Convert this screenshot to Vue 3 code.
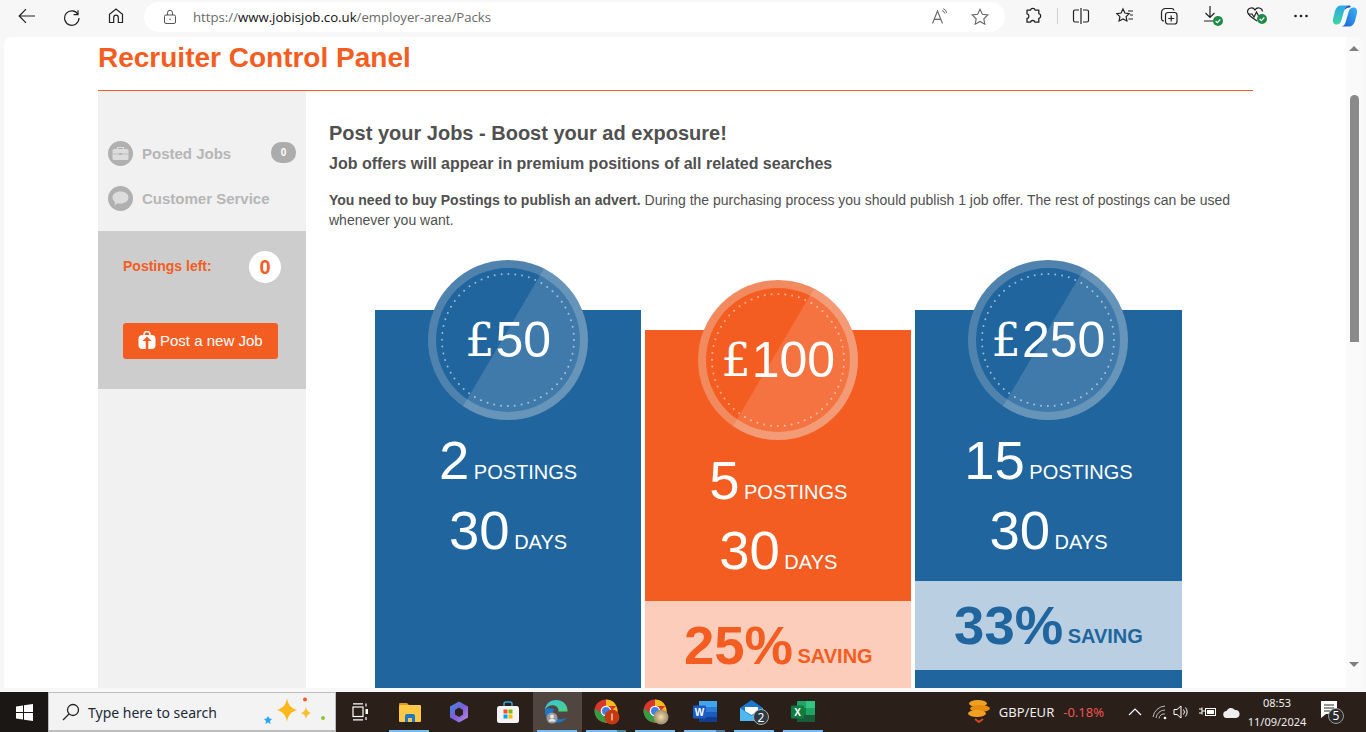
<script setup>
const cards = [
  { symbol: '£', amount: '50', posts: 2, tone: 'blue', saving: '' },
  { symbol: '£', amount: '100', posts: 5, tone: 'orange', saving: '25%' },
  { symbol: '£', amount: '250', posts: 15, tone: 'blue', saving: '33%' }
]
const palettes = {
  blue: { disc: '#20659d', ring: '#4f83ae' },
  orange: { disc: '#f45d22', ring: '#f28a60' }
}
const nav = [
  { label: 'Posted Jobs', badge: '0', icon: 'case' },
  { label: 'Customer Service', badge: '', icon: 'chat' }
]
</script>

<template>
  <div class="screen">
    <header class="toolbar">
      <div class="nav-group">
        <span class="tool wide"><svg width="20" height="20" viewBox="0 0 20 20" fill="none" stroke="#222" stroke-width="1.2"><path d="M18 10H2.500M9 3.200 2.200 10 9 16.800"/></svg></span>
        <span class="tool wide"><svg width="20" height="20" viewBox="0 0 20 20" fill="none" stroke="#222" stroke-width="1.2"><path d="M16 4.200V8.600H11.600"/><path d="M16 8.400A7.200 7.200 0 1 0 17 12"/></svg></span>
        <span class="tool wide"><svg width="20" height="20" viewBox="0 0 20 20" fill="none" stroke="#222" stroke-width="1.2"><path d="M3.500 16.500V8.400L10 3l6.500 5.400v8.100h-4.200v-5a2.300 2.300 0 0 0-4.600 0v5Z"/></svg></span>
      </div>
      <div class="address">
        <svg class="lock" width="16" height="16" viewBox="0 0 16 16" fill="none" stroke="#555" stroke-width="1"><rect x="2.500" y="6" width="11" height="8.500" rx="1.500"/><path d="M5.500 6V3.800a2.500 2.500 0 0 1 5 0V6"/><circle cx="8" cy="10.200" r=".8" fill="#555" stroke="none"/></svg>
        <span class="url">https://<b>www.jobisjob.co.uk</b>/employer-area/Packs</span>
        <span class="addr-right">
          <svg width="20" height="20" viewBox="0 0 20 20" fill="none" stroke="#666" stroke-width="1.100"><path d="M2.500 16.500 7.500 4l5 12.500M4.300 12.400h6.400"/><path d="M12 3.500a4 4 0 0 1 2.800 3M13.200 1.600a6 6 0 0 1 3.600 4.400" stroke-width="1"/></svg>
          <svg width="20" height="20" viewBox="0 0 20 20" fill="none" stroke="#666" stroke-width="1.100"><path d="m10 2.300 2.400 5 5.400.7-4 3.800 1 5.400-4.800-2.700-4.800 2.700 1-5.400-4-3.800 5.400-.7Z"/></svg>
        </span>
      </div>
      <div class="tools-right">
        <span class="tool"><svg width="20" height="20" viewBox="0 0 20 20" fill="none" stroke="#222" stroke-width="1.300"><path d="M7.500 4.200a2.400 2.400 0 0 1 4.700 0h3.600v3.500a2.400 2.400 0 0 1 0 4.700v3.800H12a2.400 2.400 0 0 0-4.600 0H4V12.500a2.400 2.400 0 0 0 0-4.700V4.200Z" stroke-linejoin="round"/></svg></span>
        <span class="sep"></span>
        <span class="tool"><svg width="20" height="20" viewBox="0 0 20 20" fill="none" stroke="#222" stroke-width="1.200"><path d="M8 4H4a1.500 1.500 0 0 0-1.500 1.500v9A1.500 1.500 0 0 0 4 16h4M12 4h4a1.500 1.500 0 0 1 1.500 1.500v9A1.500 1.500 0 0 1 16 16h-4M10 2v16"/></svg></span>
        <span class="tool"><svg width="20" height="20" viewBox="0 0 20 20" fill="none" stroke="#222" stroke-width="1.200"><path d="m8 3 1.900 4 4.300.6-3.100 3 .8 4.400L8 12.900 4.100 15l.8-4.400-3.100-3 4.300-.6Z"/><path d="M13 5h5M15 9h3M13.500 13H18"/></svg></span>
        <span class="tool"><svg width="20" height="20" viewBox="0 0 20 20" fill="none" stroke="#222" stroke-width="1.200"><rect x="6.500" y="6.500" width="11.500" height="11.500" rx="2.500"/><path d="M12.200 9.500v6M9.200 12.500h6"/><path d="M5 15a2.500 2.500 0 0 1-2.500-2.500V6.500a4 4 0 0 1 4-4h6A2.500 2.500 0 0 1 15 4.500"/></svg></span>
        <span class="tool"><svg width="22" height="24" viewBox="0 0 22 24" fill="none" stroke="#222" stroke-width="1.200"><path d="M8 2v11M3.500 9 8 13.500 12.500 9M2 17h12"/><circle cx="16" cy="17" r="5" fill="#1e8a45" stroke="none"/><path d="m13.600 17 1.700 1.700 3-3.200" stroke="#fff" stroke-width="1.100"/></svg></span>
        <span class="tool"><svg width="24" height="22" viewBox="0 0 24 22" fill="none" stroke="#222" stroke-width="1.200"><path d="M12 16C9 14 2.500 10.500 2.500 6.500A4 4 0 0 1 10 5a4 4 0 0 1 7.500 1.500"/><path d="M3 9h4l2 3 2.500-5 2 4h3"/><circle cx="17" cy="14" r="5" fill="#1e8a45" stroke="none"/><path d="m14.600 14 1.700 1.700 3-3.200" stroke="#fff" stroke-width="1.100"/></svg></span>
        <span class="tool"><svg width="16" height="4" viewBox="0 0 16 4" fill="#222"><circle cx="2.500" cy="2" r="1.300"/><circle cx="8" cy="2" r="1.300"/><circle cx="13.500" cy="2" r="1.300"/></svg></span>
        <span class="tool"><svg width="26" height="24" viewBox="0 0 26 24"><defs><linearGradient id="cp1" x1="0" y1="0" x2="0" y2="1"><stop offset="0" stop-color="#2ba8e8"/><stop offset="1" stop-color="#3fd6a0"/></linearGradient><linearGradient id="cp2" x1="1" y1="0" x2="0" y2="1"><stop offset="0" stop-color="#38b6f0"/><stop offset="1" stop-color="#1d5fd8"/></linearGradient></defs><path d="M9 1.500h7c-2.500 1-3.500 3.500-4 5.500L9.500 16c-.7 3-2.500 4.500-5 4.500-3 0-4-2.500-3.500-5.500l2-8C4 3.500 6 1.500 9 1.500Z" fill="url(#cp1)"/><path d="M17 22.500h-7c2.500-1 3.500-3.500 4-5.500l2.500-9c.7-3 2.500-4.500 5-4.500 3 0 4 2.500 3.500 5.500l-2 8c-1 3.500-3 5.500-6 5.500Z" fill="url(#cp2)"/><path d="M12 7c.5-2 1.500-4.500 4-5.500h1c1.500 0 2.500 1.500 1 2-3 0-5 1.500-6 3.500Z" fill="#1a5ab8"/></svg></span>
      </div>
    </header>

    <div class="viewport">
      <div class="page">
        <h1 class="title">Recruiter Control Panel</h1>
        <div class="columns">
          <aside class="sidebar">
            <nav class="side-nav">
              <div v-for="item in nav" :key="item.label" class="side-item">
                <span class="side-icon">
                  <svg v-if="item.icon === 'case'" width="17" height="15" viewBox="0 0 17 15"><rect x=".5" y="3" width="16" height="11" rx="1.500" fill="#dcdcdc"/><path d="M5.500 3V1.500h6V3" fill="none" stroke="#dcdcdc" stroke-width="1.200"/><path d="M.5 8h16" stroke="#b5b5b5" stroke-width=".7"/><rect x="7" y="7" width="3" height="2" fill="#b5b5b5"/></svg>
                  <svg v-else width="19" height="17" viewBox="0 0 19 17"><path d="M9.500 1.500c4.500 0 8 2.500 8 6s-3.500 6-8 6c-1 0-1.800-.1-2.500-.3L3.500 15.500l.7-3.300C2.500 11 1.500 9.400 1.500 7.500c0-3.500 3.500-6 8-6Z" fill="#dcdcdc"/></svg>
                </span>
                <span class="side-label">{{ item.label }}</span>
                <span v-if="item.badge" class="side-badge">{{ item.badge }}</span>
              </div>
            </nav>
            <section class="postings">
              <div class="postings-row">
                <span class="postings-label">Postings left:</span>
                <span class="postings-count">0</span>
              </div>
              <button class="post-btn">
                <svg width="18" height="18" viewBox="0 0 18 18"><path d="M6 5V3.500a3 3 0 0 1 6 0V5" fill="none" stroke="#fff" stroke-width="1.500"/><rect x="0.500" y="4" width="17" height="14" rx="4" fill="#fff"/><path d="M9 5.500 13.500 10H10.300v8H7.700v-8H4.500Z" fill="#f45d22"/></svg>
                <span>Post a new Job</span>
              </button>
            </section>
          </aside>

          <main class="main">
            <h2 class="lead">Post your Jobs - Boost your ad exposure!</h2>
            <h3 class="sublead">Job offers will appear in premium positions of all related searches</h3>
            <p class="intro"><b>You need to buy Postings to publish an advert.</b> During the purchasing process you should publish 1 job offer. The rest of postings can be used whenever you want.</p>

            <div class="cards">
              <article v-for="(card, i) in cards" :key="card.amount" class="card" :class="card.tone">
                <div class="coin">
                  <svg width="160" height="160" viewBox="0 0 160 160">
                    <defs>
                      <clipPath :id="'clip' + i"><circle cx="80" cy="80" r="80"/></clipPath>
                    </defs>
                    <circle cx="80" cy="80" r="80" :fill="palettes[card.tone].ring"/>
                    <circle cx="80" cy="80" r="72" :fill="palettes[card.tone].disc"/>
                    <path d="M127 -10H180V170H21Z" fill="#fff" fill-opacity=".14" :clip-path="'url(#clip' + i + ')'"/>
                    <circle cx="80" cy="80" r="66" fill="none" stroke="#fff" stroke-opacity=".55" stroke-width="2" stroke-linecap="round" stroke-dasharray="0 6.910"/>
                  </svg>
                  <span class="price"><span class="symbol">{{ card.symbol }}</span>{{ card.amount }}</span>
                </div>
                <div class="rows">
                  <div class="row"><span class="num">{{ card.posts }}</span> <span class="unit">POSTINGS</span></div>
                  <div class="row"><span class="num">30</span> <span class="unit">DAYS</span></div>
                </div>
                <div v-if="card.saving" class="saving">
                  <span class="pct">{{ card.saving }}</span> <span class="save-word">SAVING</span>
                </div>
              </article>
            </div>
          </main>
        </div>
      </div>
      <div class="scrollbar">
        <span class="arrow up"></span>
        <span class="thumb"></span>
        <span class="arrow down"></span>
      </div>
    </div>

    <footer class="taskbar">
      <div class="start"><svg width="17" height="17" viewBox="0 0 17 17" fill="#fff"><path d="M0 2.400 7 1.400V8H0ZM8 1.300 17 0V8H8ZM0 9h7v6.600L0 14.600ZM8 9h9v8L8 15.700Z"/></svg></div>
      <div class="search">
        <svg width="20" height="20" viewBox="0 0 20 20" fill="none" stroke="#222" stroke-width="1.300"><circle cx="12" cy="8" r="5.500"/><path d="M8 12 2 18"/></svg>
        <span class="search-text">Type here to search</span>
        <svg class="sparkles" width="66" height="30" viewBox="0 0 66 30"><path d="M27 1c1 7 4 10 10 12-6 2-9 5-10 12-1-7-4-10-10-12 6-2 9-5 10-12Z" fill="#fbb81b"/><path d="M46 10c.5 3 2 5 5 6-3 1-4.500 3-5 6-.5-3-2-5-5-6 3-1 4.500-3 5-6Z" fill="#fbc02d"/><path d="M8 19l1.500 2.500 2.500.5-2 2 .5 3L8 25.500 5.500 27l.5-3-2-2 2.500-.5Z" fill="#2aa8f0"/><circle cx="45" cy="2.500" r="2" fill="#ef5a28"/><circle cx="63" cy="21" r="2" fill="#8cc63f"/></svg>
      </div>
      <span class="task"><svg width="17" height="18" viewBox="0 0 17 18" fill="none" stroke="#fff" stroke-width="1.200"><rect x="1" y="4" width="10" height="9.500"/><path d="M1 .8h10M1 16.800h10M14 .5v3M14 14v3"/><rect x="13.500" y="6" width="2.500" height="5" fill="#fff" stroke="none"/></svg></span>
      <span class="task on"><svg width="24" height="22" viewBox="0 0 24 22"><path d="M1 3a1 1 0 0 1 1-1h7l2 2H1Z" fill="#d99a1e"/><rect x="1" y="4" width="22" height="17" rx="1" fill="#fcc846"/><path d="M7 21v-6a2 2 0 0 1 2-2h6a2 2 0 0 1 2 2v6h-3v-4h-4v4Z" fill="#1b77c9"/></svg></span>
      <span class="task"><svg width="24" height="24" viewBox="0 0 24 24"><defs><linearGradient id="cpl" x1="0" y1="0" x2="1" y2="1"><stop offset="0" stop-color="#3a8ce0"/><stop offset=".5" stop-color="#7a5fd8"/><stop offset="1" stop-color="#c58ae8"/></linearGradient></defs><path d="M12 1.500 21 6.500v11L12 22.500 3 17.500v-11Zm0 6L8 10v4.500l4 2.500 4-2.500V10Z" fill="url(#cpl)"/></svg></span>
      <span class="task"><svg width="24" height="24" viewBox="0 0 24 24"><path d="M8 7V4a2 2 0 0 1 2-2h4a2 2 0 0 1 2 2v3" fill="none" stroke="#2aa8e0" stroke-width="1.500"/><rect x="1" y="6" width="22" height="17" rx="2.500" fill="#f4f4f4"/><rect x="7.500" y="9.500" width="4" height="4" fill="#f25022"/><rect x="12.500" y="9.500" width="4" height="4" fill="#7fba00"/><rect x="7.500" y="14.500" width="4" height="4" fill="#00a4ef"/><rect x="12.500" y="14.500" width="4" height="4" fill="#ffb900"/></svg></span>
      <span class="task on active"><svg width="26" height="26" viewBox="0 0 26 26"><defs><linearGradient id="edg" x1="0" y1="0" x2="1" y2="1"><stop offset="0" stop-color="#36c4ea"/><stop offset="1" stop-color="#4ad27a"/></linearGradient></defs><path d="M12 1C6 1 1.500 5 1 11c2-4 6-5.500 9.500-4.500 3 1 4.500 3.500 4 6h9c.5-6-4-11.500-11.500-11.500Z" fill="url(#edg)"/><path d="M1 11c-.5 6 3.500 12 10.500 12.500 5 .5 9-1.500 11-5-3 2-8 2.500-11 .5C8 17 8 12.500 10.500 10 6 8.500 2.500 9 1 11Z" fill="#1b78c8"/><circle cx="8" cy="19" r="5.500" fill="#9a9a9a"/><circle cx="8" cy="17.500" r="2" fill="#e8e8e8"/><path d="M4.500 22.500a3.600 3.600 0 0 1 7 0Z" fill="#e8e8e8"/></svg></span>
      <span class="task on multi"><svg width="26" height="26" viewBox="0 0 26 26"><circle cx="12" cy="12" r="11.500" fill="#d8372c"/><path d="M12 .5a11.500 11.500 0 0 1 10.300 6.400H12Z" fill="#f3bd1a"/><path d="M22.300 6.900A11.500 11.500 0 0 1 11 23.500L16.500 13Z" fill="#f3bd1a"/><path d="M.9 9.500A11.500 11.500 0 0 0 12 23.500l5-9.500-10 0Z" fill="#2f9e44"/><circle cx="12" cy="12" r="5.300" fill="#fff"/><circle cx="12" cy="12" r="4" fill="#3b82e8"/><circle cx="18" cy="18" r="7.500" fill="#c23a14"/><rect x="17.300" y="14.500" width="1.400" height="7" fill="#f4d0a0"/></svg></span>
      <span class="task on"><svg width="26" height="26" viewBox="0 0 26 26"><defs><radialGradient id="gold"><stop offset="0" stop-color="#f5dca0"/><stop offset="1" stop-color="#9a8a70"/></radialGradient></defs><circle cx="12" cy="12" r="11.500" fill="#d8372c"/><path d="M12 .5a11.500 11.500 0 0 1 10.300 6.400H12Z" fill="#f3bd1a"/><path d="M22.300 6.900A11.500 11.500 0 0 1 11 23.500L16.500 13Z" fill="#f3bd1a"/><path d="M.9 9.500A11.500 11.500 0 0 0 12 23.500l5-9.500-10 0Z" fill="#2f9e44"/><circle cx="12" cy="12" r="5.300" fill="#fff"/><circle cx="12" cy="12" r="4" fill="#3b82e8"/><circle cx="18" cy="18" r="7.500" fill="url(#gold)"/></svg></span>
      <span class="task on multi"><svg width="26" height="24" viewBox="0 0 26 24"><rect x="7" y="1" width="18" height="21" rx="1" fill="#2b7cd3"/><rect x="7" y="1" width="18" height="6" fill="#41a5ee"/><rect x="7" y="12" width="18" height="5" fill="#185abd"/><rect x="7" y="17" width="18" height="5" fill="#103f91"/><rect x="1" y="5.500" width="13" height="13" rx="1" fill="#1a5cc4"/><text x="7.500" y="15.500" class="app-letter" text-anchor="middle">W</text></svg></span>
      <span class="task on"><svg width="30" height="26" viewBox="0 0 30 26"><path d="M1 9 12.500 1 24 9v13H1Z" fill="#1b78d0"/><path d="M1 9v13h23V9L12.500 17Z" fill="#4fb8f0"/><path d="M6 8h13v4l-6.500 4L6 12Z" fill="#fff"/><circle cx="22" cy="18" r="7.500" fill="#2d3a44" stroke="#aaa" stroke-width="1"/><text x="22" y="22.500" class="badge-digit" text-anchor="middle">2</text></svg></span>
      <span class="task on"><svg width="26" height="24" viewBox="0 0 26 24"><rect x="7" y="1" width="18" height="21" rx="1" fill="#21a366"/><rect x="16" y="1" width="9" height="7" fill="#33c481"/><rect x="7" y="8" width="9" height="7" fill="#107c41"/><rect x="7" y="15" width="18" height="7" fill="#185c37"/><rect x="1" y="5.500" width="13" height="13" rx="1" fill="#107c41"/><text x="7.500" y="15.500" class="app-letter" text-anchor="middle">X</text></svg></span>

      <div class="tray">
        <div class="widget">
          <svg width="24" height="26" viewBox="0 0 24 26"><ellipse cx="11" cy="4.500" rx="9" ry="3.500" fill="#f0a020"/><ellipse cx="13" cy="9.500" rx="10" ry="3.500" fill="#e88c10"/><ellipse cx="10" cy="14.500" rx="9" ry="3.500" fill="#f0a020"/><path d="m8 20 4 3 4-3" fill="none" stroke="#d8481c" stroke-width="2"/></svg>
          <span class="pair">GBP/EUR</span>
          <span class="delta">-0.18%</span>
        </div>
        <span class="tray-icon chev"><svg width="14" height="8" viewBox="0 0 14 8" fill="none" stroke="#fff" stroke-width="1.200"><path d="m1 7 6-6 6 6"/></svg></span>
        <span class="tray-icon wifi"><svg width="16" height="16" viewBox="0 0 16 16" fill="none" stroke="#bbb" stroke-width="1"><path d="M1 13a13 13 0 0 1 12-11M4 14a9 9 0 0 1 9-8M7 14.500a5 5 0 0 1 6-4.500"/><circle cx="13" cy="14" r="1.300" fill="#fff" stroke="none"/></svg></span>
        <span class="tray-icon vol"><svg width="18" height="16" viewBox="0 0 18 16" fill="none" stroke="#fff" stroke-width="1"><path d="M1 5.500h3L8 2v12l-4-3.500H1Z"/><path d="M10.500 5.500a4 4 0 0 1 0 5M12.500 3.500a7 7 0 0 1 0 9"/></svg></span>
        <span class="tray-icon batt"><svg width="17" height="12" viewBox="0 0 17 12"><path d="M0 3h3M0 7h3M3 1.500v7M3 5h3" stroke="#fff" fill="none"/><rect x="6.500" y="2.500" width="10" height="7" fill="none" stroke="#fff"/><rect x="8" y="4" width="7" height="4" fill="#fff"/></svg></span>
        <span class="tray-icon cloud"><svg width="17" height="11" viewBox="0 0 17 11" fill="#eee"><path d="M4 11a3.500 3.500 0 0 1-.5-7A5 5 0 0 1 12 3a4 4 0 0 1 1 8Z"/></svg></span>
        <div class="clock"><span>08:53</span><span>11/09/2024</span></div>
        <span class="notif"><svg width="30" height="28" viewBox="0 0 30 28"><path d="M3 3h16v13H8l-5 4Z" fill="#fff"/><path d="M6 7h10M6 10h10M6 13h6" stroke="#2a2a2a"/><circle cx="18" cy="18" r="7.500" fill="#2b2b2b" stroke="#999"/><text x="18" y="22" class="badge-digit" text-anchor="middle">5</text></svg></span>
      </div>
    </footer>
  </div>
</template>

<style>
html, body { margin: 0; padding: 0; overflow: hidden; }
</style>

<style scoped>
.screen {
  width: 1366px;
  height: 732px;
  display: flex;
  flex-direction: column;
  background: #f7f7f7;
  overflow: hidden;
  font-family: "Liberation Sans", Arial, sans-serif;
}

/* Browser toolbar */
.toolbar { height: 37px; flex: none; display: flex; align-items: flex-start; }
.nav-group { display: flex; padding-left: 5px; }
.tool { width: 44px; height: 32px; display: flex; align-items: center; justify-content: center; flex: none; }
.tool.wide { width: 44.500px; }
.address {
  width: 861px; height: 30px; margin: 2px 0 0 5.500px; background: #fff; border-radius: 15px;
  display: flex; align-items: center; padding-left: 18px; box-sizing: border-box; flex: none;
}
.lock { margin-right: 15px; flex: none; }
.url { font: 13.200px "Open Sans", "Noto Sans", sans-serif; color: #6a6a6a; }
.url b { font-weight: 400; color: #111; }
.addr-right { margin-left: auto; display: flex; gap: 20px; padding-right: 15px; }
.tools-right { display: flex; margin-left: 6px; }
.sep { width: 4px; flex: none; display: flex; justify-content: center; padding-top: 8px; height: 16px; }
.sep::before { content: ""; width: 1px; height: 16px; background: #cfcfcf; }

/* Page viewport */
.viewport {
  flex: 1; min-height: 0; margin: 0 4px 4px; background: #fff; border-radius: 8px 8px 0 0;
  display: flex; overflow: hidden;
}
.page { flex: 1; min-width: 0; padding-left: 94px; overflow: hidden; }
.title {
  margin: 0; height: 53px; width: 1155px; border-bottom: 1px solid #f45d22;
  color: #f45d22; font-size: 28px; font-weight: 700; line-height: 42px;
}
.columns { display: flex; width: 1155px; }
.sidebar { width: 208px; flex: none; background: #f1f1f1; height: 620px; }
.side-nav { height: 140px; padding: 50px 10px 0; box-sizing: border-box; display: flex; flex-direction: column; gap: 20px; }
.side-item { height: 25px; display: flex; align-items: center; }
.side-icon { width: 25px; height: 25px; border-radius: 50%; background: #b0b0b0; display: flex; align-items: center; justify-content: center; flex: none; }
.side-label { margin-left: 9px; color: #b6b6b6; font-size: 15px; font-weight: 700; }
.side-badge {
  margin: -3px 0 0 auto; width: 25px; height: 21px; border-radius: 10px; background: #acacac;
  color: #fff; font-size: 10px; font-weight: 700; display: flex; align-items: center; justify-content: center;
}
.postings { height: 158px; background: #cdcdcd; padding: 20px 25px 0; box-sizing: border-box; }
.postings-row { display: flex; align-items: center; height: 32px; }
.postings-label { color: #f45d22; font-size: 14px; font-weight: 700; width: 126px; margin-top: -2px; }
.postings-count {
  width: 32px; height: 32px; border-radius: 50%; background: #fff; color: #f45d22;
  font-size: 20px; font-weight: 700; display: flex; align-items: center; justify-content: center;
}
.post-btn {
  margin-top: 40px; width: 155px; height: 36px; border: 0; border-radius: 3px; background: #f45d22; color: #fff;
  font: 15px "Liberation Sans", Arial, sans-serif; display: flex; align-items: center; gap: 4px; padding: 0 0 2px 15px;
}
.main { flex: 1; min-width: 0; padding: 30px 0 0 23px; color: #505050; }
.lead { margin: 0; font-size: 20px; line-height: 24px; font-weight: 700; }
.sublead { margin: 9px 0 0; font-size: 16px; line-height: 20px; font-weight: 700; }
.intro { margin: 16px 0 0; font-size: 14px; line-height: 20px; width: 905px; }
.cards { display: flex; gap: 4px; margin: 80px 0 0 46px; align-items: flex-start; }
.card { width: 266.200px; flex: none; color: #fff; height: 460px; display: flex; flex-direction: column; text-align: center; }
.card.blue { background: #20659d; }
.card.orange { background: #f45d22; margin-top: 20px; }
.coin { width: 160px; height: 160px; margin: -50px auto 0; position: relative; flex: none; }
.coin svg { display: block; }
.price {
  position: absolute; inset: 0; display: flex; align-items: center; justify-content: center;
  font-size: 50px; color: #fff;
}
.symbol { font-family: "DejaVu Serif", serif; font-size: 46px; font-weight: 400; margin-right: 1px; }
.rows { height: 161px; padding-top: 6px; flex: none; }
.row { height: 70px; line-height: 70px; white-space: nowrap; }
.num { font-size: 54.500px; }
.unit { font-size: 20px; }
.saving { height: 89px; line-height: 89px; white-space: nowrap; flex: none; font-weight: 700; margin-top: -6px; }
.orange .saving { background: #fccdbb; color: #f45d22; height: 120px; }
.blue .saving { background: #bad0e2; color: #20659d; }
.pct { font-size: 54.500px; }
.save-word { font-size: 20px; vertical-align: 1px; }

/* Scrollbar */
.scrollbar { width: 16px; flex: none; background: #fafafa; display: flex; flex-direction: column; align-items: center; }
.arrow { width: 0; height: 0; border-left: 5px solid transparent; border-right: 5px solid transparent; flex: none; }
.arrow.up { border-bottom: 5px solid #7f7f7f; margin-top: 9px; }
.arrow.down { border-top: 5px solid #7f7f7f; margin-top: 320px; }
.thumb { width: 9px; height: 247px; margin-top: 44px; border-radius: 5px 5px 0 0; background: #8a8a8a; flex: none; }

/* Taskbar */
.taskbar { height: 40px; flex: none; display: flex; background: #2b1f1a; color: #fff; font-family: "Noto Sans", "Open Sans", sans-serif; }
.start { width: 48px; flex: none; background: #1b1715; display: flex; align-items: center; justify-content: center; }
.search {
  width: 288px; flex: none; background: #f3f3f3; box-sizing: border-box; border: 1px solid #bdbdbd; border-bottom-width: 2px;
  display: flex; align-items: center; padding-left: 12px; color: #222;
}
.search-text { margin: 1px 0 0 7px; font-size: 14px; color: #1d2a38; }
.sparkles { margin-left: auto; margin-right: 9px; }
.task { width: 49.200px; flex: none; display: flex; align-items: center; justify-content: center; position: relative; }
.task.on::after { content: ""; position: absolute; left: 4px; right: 5px; bottom: 0; height: 2px; background: #76b9ed; }
.task.multi::after { background: linear-gradient(90deg, #76b9ed 78%, #4d7f9f 78%); }
.task.active { background: #51463f; }
.app-letter { font: 700 10px "Liberation Sans", sans-serif; fill: #fff; }
.badge-digit { font: 400 12px "Noto Sans", sans-serif; fill: #fff; }
.tray { margin-left: auto; display: flex; align-items: center; height: 40px; }
.widget { display: flex; align-items: center; font-size: 13px; }
.pair { margin-left: 8px; color: #eee; }
.delta { margin-left: 9px; color: #ef5350; }
.tray-icon { display: flex; align-items: center; justify-content: center; flex: none; }
.chev { margin-left: 24px; width: 14px; }
.wifi { margin-left: 10px; }
.vol { margin-left: 5px; }
.batt { margin-left: 7.500px; }
.cloud { margin-left: 7px; }
.clock { display: flex; flex-direction: column; align-items: center; font-size: 11px; line-height: 19px; margin-left: 7.500px; width: 60px; color: #eee; }
.notif { width: 34px; margin: 0 16px 0 9px; display: flex; justify-content: center; }
</style>
